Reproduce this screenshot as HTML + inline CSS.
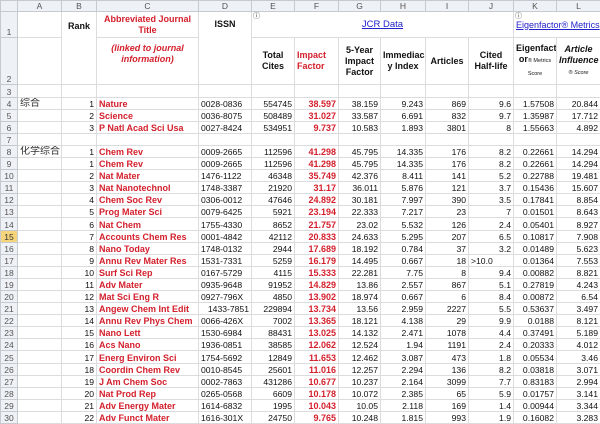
<!DOCTYPE html>
<html><head><meta charset="utf-8"><style>
*{margin:0;padding:0;box-sizing:border-box}
body{width:600px;height:415px;overflow:hidden;background:#fff;font-family:"Liberation Sans","Noto Sans CJK SC",sans-serif;font-size:8.6px;color:#111}
table{border-collapse:collapse;table-layout:fixed;width:600px}
td{border:1px solid #dadcdd;padding:0 2px;white-space:nowrap;overflow:hidden;line-height:10px;text-align:right;vertical-align:bottom}
tr.d td{height:12.1px}
td.rh{background:#eef1f5;color:#555;font-size:8.5px;text-align:center;border-color:#c5cad1;padding:0}
tr.ch td{background:#eef1f5;color:#555;font-size:8.5px;text-align:center;height:11px;border-color:#c5cad1;vertical-align:middle;line-height:9px}
.t{color:#d4202c;font-weight:bold;text-align:left;padding-left:2px;overflow:visible;font-size:9px}
.f{color:#d4202c;font-weight:bold;font-size:9px}
.l{text-align:left}
.cj{text-align:left;font-size:10px;color:#333}
.h{font-weight:bold;text-align:center;vertical-align:middle;font-size:9px;line-height:11px;white-space:normal}
.lk{color:#2222cc;text-decoration:underline;text-align:center;vertical-align:middle;font-size:9.5px;overflow:visible}
.sm{font-size:5.5px;font-weight:normal}
</style></head><body>
<table>
<colgroup><col style="width:17px"><col style="width:44px"><col style="width:35px"><col style="width:102px"><col style="width:53px"><col style="width:43px"><col style="width:44px"><col style="width:42px"><col style="width:45px"><col style="width:43px"><col style="width:45px"><col style="width:43px"><col style="width:44px"></colgroup>
<tr class="ch"><td></td><td>A</td><td>B</td><td>C</td><td>D</td><td>E</td><td>F</td><td>G</td><td>H</td><td>I</td><td>J</td><td>K</td><td>L</td></tr>
<tr style="height:26px"><td class="rh" style="vertical-align:bottom">1</td><td></td><td rowspan="2" class="h" style="vertical-align:top;padding-top:9px">Rank</td><td class="h" style="color:#d4202c;vertical-align:top;padding-top:2px">Abbreviated Journal Title</td><td rowspan="2" class="h" style="vertical-align:top;padding-top:7px">ISSN</td><td colspan="6" class="lk" style="position:relative"><span style="position:absolute;left:1px;top:0;font-size:7px;color:#333">ⓘ</span>JCR Data</td><td colspan="2" class="lk" style="position:relative;vertical-align:middle;white-space:nowrap;padding:0 0 0 2px;text-align:left;font-size:9px"><span style="position:absolute;left:1px;top:0;font-size:7px;color:#333">ⓘ</span>Eigenfactor® Metrics</td></tr>
<tr style="height:47px"><td class="rh" style="vertical-align:bottom">2</td><td></td><td class="h" style="color:#d4202c;font-style:italic;vertical-align:top;padding-top:5px">(linked to journal information)</td><td class="h">Total Cites</td><td class="h" style="color:#d4202c;text-align:left">Impact Factor</td><td class="h">5-Year Impact Factor</td><td class="h">Immediac y Index</td><td class="h">Articles</td><td class="h">Cited Half-life</td><td class="h">Eigenfact or<span class="sm">® Metrics</span><br><span class="sm">Score</span></td><td class="h" style="font-style:italic">Article Influence<br><span class="sm">® Score</span></td></tr>
<tr style="height:12.5px"><td class="rh">3</td><td></td><td></td><td></td><td></td><td></td><td></td><td></td><td></td><td></td><td></td><td></td><td></td></tr>
<tr class="d"><td class="rh">4</td><td class="cj">综合</td><td>1</td><td class="t">Nature</td><td class="l">0028-0836</td><td>554745</td><td class="f">38.597</td><td>38.159</td><td>9.243</td><td>869</td><td>9.6</td><td>1.57508</td><td>20.844</td></tr>
<tr class="d"><td class="rh">5</td><td></td><td>2</td><td class="t">Science</td><td class="l">0036-8075</td><td>508489</td><td class="f">31.027</td><td>33.587</td><td>6.691</td><td>832</td><td>9.7</td><td>1.35987</td><td>17.712</td></tr>
<tr class="d"><td class="rh">6</td><td></td><td>3</td><td class="t">P Natl Acad Sci Usa</td><td class="l">0027-8424</td><td>534951</td><td class="f">9.737</td><td>10.583</td><td>1.893</td><td>3801</td><td>8</td><td>1.55663</td><td>4.892</td></tr>
<tr class="d"><td class="rh">7</td><td></td><td></td><td></td><td></td><td></td><td></td><td></td><td></td><td></td><td></td><td></td><td></td></tr>
<tr class="d"><td class="rh">8</td><td class="cj">化学综合</td><td>1</td><td class="t">Chem Rev</td><td class="l">0009-2665</td><td>112596</td><td class="f">41.298</td><td>45.795</td><td>14.335</td><td>176</td><td>8.2</td><td>0.22661</td><td>14.294</td></tr>
<tr class="d"><td class="rh">9</td><td></td><td>1</td><td class="t">Chem Rev</td><td class="l">0009-2665</td><td>112596</td><td class="f">41.298</td><td>45.795</td><td>14.335</td><td>176</td><td>8.2</td><td>0.22661</td><td>14.294</td></tr>
<tr class="d"><td class="rh">10</td><td></td><td>2</td><td class="t">Nat Mater</td><td class="l">1476-1122</td><td>46348</td><td class="f">35.749</td><td>42.376</td><td>8.411</td><td>141</td><td>5.2</td><td>0.22788</td><td>19.481</td></tr>
<tr class="d"><td class="rh">11</td><td></td><td>3</td><td class="t">Nat Nanotechnol</td><td class="l">1748-3387</td><td>21920</td><td class="f">31.17</td><td>36.011</td><td>5.876</td><td>121</td><td>3.7</td><td>0.15436</td><td>15.607</td></tr>
<tr class="d"><td class="rh">12</td><td></td><td>4</td><td class="t">Chem Soc Rev</td><td class="l">0306-0012</td><td>47646</td><td class="f">24.892</td><td>30.181</td><td>7.997</td><td>390</td><td>3.5</td><td>0.17841</td><td>8.854</td></tr>
<tr class="d"><td class="rh">13</td><td></td><td>5</td><td class="t">Prog Mater Sci</td><td class="l">0079-6425</td><td>5921</td><td class="f">23.194</td><td>22.333</td><td>7.217</td><td>23</td><td>7</td><td>0.01501</td><td>8.643</td></tr>
<tr class="d"><td class="rh">14</td><td></td><td>6</td><td class="t">Nat Chem</td><td class="l">1755-4330</td><td>8652</td><td class="f">21.757</td><td>23.02</td><td>5.532</td><td>126</td><td>2.4</td><td>0.05401</td><td>8.927</td></tr>
<tr class="d"><td class="rh" style="background:#f6d47a;color:#333">15</td><td></td><td>7</td><td class="t">Accounts Chem Res</td><td class="l">0001-4842</td><td>42112</td><td class="f">20.833</td><td>24.633</td><td>5.295</td><td>207</td><td>6.5</td><td>0.10817</td><td>7.908</td></tr>
<tr class="d"><td class="rh">16</td><td></td><td>8</td><td class="t">Nano Today</td><td class="l">1748-0132</td><td>2944</td><td class="f">17.689</td><td>18.192</td><td>0.784</td><td>37</td><td>3.2</td><td>0.01489</td><td>5.623</td></tr>
<tr class="d"><td class="rh">17</td><td></td><td>9</td><td class="t">Annu Rev Mater Res</td><td class="l">1531-7331</td><td>5259</td><td class="f">16.179</td><td>14.495</td><td>0.667</td><td>18</td><td class="l">&gt;10.0</td><td>0.01364</td><td>7.553</td></tr>
<tr class="d"><td class="rh">18</td><td></td><td>10</td><td class="t">Surf Sci Rep</td><td class="l">0167-5729</td><td>4115</td><td class="f">15.333</td><td>22.281</td><td>7.75</td><td>8</td><td>9.4</td><td>0.00882</td><td>8.821</td></tr>
<tr class="d"><td class="rh">19</td><td></td><td>11</td><td class="t">Adv Mater</td><td class="l">0935-9648</td><td>91952</td><td class="f">14.829</td><td>13.86</td><td>2.557</td><td>867</td><td>5.1</td><td>0.27819</td><td>4.243</td></tr>
<tr class="d"><td class="rh">20</td><td></td><td>12</td><td class="t">Mat Sci Eng R</td><td class="l">0927-796X</td><td>4850</td><td class="f">13.902</td><td>18.974</td><td>0.667</td><td>6</td><td>8.4</td><td>0.00872</td><td>6.54</td></tr>
<tr class="d"><td class="rh">21</td><td></td><td>13</td><td class="t">Angew Chem Int Edit</td><td>1433-7851</td><td>229894</td><td class="f">13.734</td><td>13.56</td><td>2.959</td><td>2227</td><td>5.5</td><td>0.53637</td><td>3.497</td></tr>
<tr class="d"><td class="rh">22</td><td></td><td>14</td><td class="t">Annu Rev Phys Chem</td><td class="l">0066-426X</td><td>7002</td><td class="f">13.365</td><td>18.121</td><td>4.138</td><td>29</td><td>9.9</td><td>0.0188</td><td>8.121</td></tr>
<tr class="d"><td class="rh">23</td><td></td><td>15</td><td class="t">Nano Lett</td><td class="l">1530-6984</td><td>88431</td><td class="f">13.025</td><td>14.132</td><td>2.471</td><td>1078</td><td>4.4</td><td>0.37491</td><td>5.189</td></tr>
<tr class="d"><td class="rh">24</td><td></td><td>16</td><td class="t">Acs Nano</td><td class="l">1936-0851</td><td>38585</td><td class="f">12.062</td><td>12.524</td><td>1.94</td><td>1191</td><td>2.4</td><td>0.20333</td><td>4.012</td></tr>
<tr class="d"><td class="rh">25</td><td></td><td>17</td><td class="t">Energ Environ Sci</td><td class="l">1754-5692</td><td>12849</td><td class="f">11.653</td><td>12.462</td><td>3.087</td><td>473</td><td>1.8</td><td>0.05534</td><td>3.46</td></tr>
<tr class="d"><td class="rh">26</td><td></td><td>18</td><td class="t">Coordin Chem Rev</td><td class="l">0010-8545</td><td>25601</td><td class="f">11.016</td><td>12.257</td><td>2.294</td><td>136</td><td>8.2</td><td>0.03818</td><td>3.071</td></tr>
<tr class="d"><td class="rh">27</td><td></td><td>19</td><td class="t">J Am Chem Soc</td><td class="l">0002-7863</td><td>431286</td><td class="f">10.677</td><td>10.237</td><td>2.164</td><td>3099</td><td>7.7</td><td>0.83183</td><td>2.994</td></tr>
<tr class="d"><td class="rh">28</td><td></td><td>20</td><td class="t">Nat Prod Rep</td><td class="l">0265-0568</td><td>6609</td><td class="f">10.178</td><td>10.072</td><td>2.385</td><td>65</td><td>5.9</td><td>0.01757</td><td>3.141</td></tr>
<tr class="d"><td class="rh">29</td><td></td><td>21</td><td class="t">Adv Energy Mater</td><td class="l">1614-6832</td><td>1995</td><td class="f">10.043</td><td>10.05</td><td>2.118</td><td>169</td><td>1.4</td><td>0.00944</td><td>3.344</td></tr>
<tr class="d"><td class="rh">30</td><td></td><td>22</td><td class="t">Adv Funct Mater</td><td class="l">1616-301X</td><td>24750</td><td class="f">9.765</td><td>10.248</td><td>1.815</td><td>993</td><td>1.9</td><td>0.16082</td><td>3.283</td></tr>
</table>
</body></html>
